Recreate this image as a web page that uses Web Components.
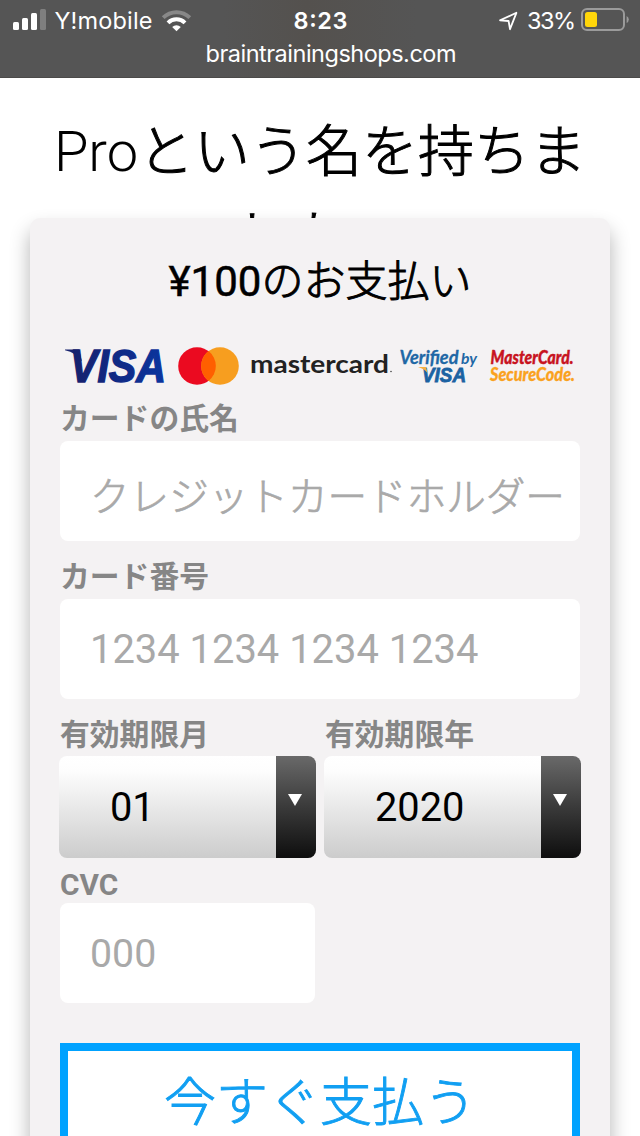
<!DOCTYPE html>
<html lang="ja">
<head>
<meta charset="utf-8">
<title>お支払い</title>
<style>
html, body {
  margin: 0;
  height: 1136px;
  overflow: hidden;
  background: #fff;
  font-family: Roboto, "Noto Sans CJK JP", sans-serif;
}
.kana-text {
  font-weight: 300;
  -webkit-text-stroke: 1px currentColor;
}
</style>
</head>
<body>
<phone-page>
  <status-bar slot="status"></status-bar>
  <page-title slot="title">Pro<span class="kana-text">という名を持ちました。</span></page-title>
  <payment-card>
    <span slot="heading">¥100<span class="kana-text">のお支払い</span></span>
    <brand-logos></brand-logos>
    <form-field label="カードの氏名" class="kana">クレジットカードホルダー</form-field>
    <form-field label="カード番号">1234 1234 1234 1234</form-field>
    <field-row>
      <select-field label="有効期限月">01</select-field>
      <select-field label="有効期限年">2020</select-field>
    </field-row>
    <form-field label="CVC" class="half">000</form-field>
    <pay-button>今すぐ支払う</pay-button>
  </payment-card>
</phone-page>

<script>
class BaseElement extends HTMLElement {
  constructor() {
    super();
    this.attachShadow({mode: 'open'}).innerHTML = this.template();
  }
}

customElements.define('phone-page',
  class extends BaseElement {
    template(){
      return `
<style>
:host {
  display: flex;
  flex-direction: column;
  width: 640px;
  height: 1136px;
  overflow: hidden;
}
</style>
<slot name="status"></slot>
<slot name="title"></slot>
<slot></slot>
      `
    }
  }
);

customElements.define('status-bar',
  class extends BaseElement {
    template(){
      return `
<style>
:host {
  display: block;
  flex: none;
  height: 78px;
  background: linear-gradient(90deg, #555 0, #555 35%, #54514e 48%, #555 65%, #555 100%);
  box-shadow: inset 0 -1px #4b4a49;
}
svg {
  display: block;
  font-family: Inter, "Liberation Sans", sans-serif;
}
</style>
<svg width="640" height="78" fill="#fff">
  <rect x="13" y="22" width="6" height="8" rx="1.5"/>
  <rect x="22" y="18" width="6" height="12" rx="1.5"/>
  <rect x="31" y="13" width="6" height="17" rx="1.5"/>
  <rect x="40" y="9" width="6" height="21" rx="1.5" opacity=".25"/>
  <text x="54.5" y="29" font-size="23.5" textLength="98">Y!mobile</text>
  <g fill="none" stroke="#fff">
    <path d="M163.2 17.6a19 19 0 0 1 26.6 0" stroke-width="4" opacity=".3"/>
    <path d="M168 22.8a12 12 0 0 1 17 0" stroke-width="4"/>
  </g>
  <path d="M172.2 27a6.2 6.2 0 0 1 8.6 0l-4.3 4.2z"/>
  <text x="293.5" y="29" font-size="23.5" font-weight="600" textLength="54">8:23</text>
  <path d="M500 20.3 516.4 12.8 510 29.2 508.6 21z" fill="none" stroke="#fff" stroke-width="1.8" stroke-linejoin="round"/>
  <text x="527" y="29" font-size="23.5" textLength="49">33%</text>
  <rect x="582" y="9" width="42" height="21" rx="5" fill="none" stroke="#9b9b9b" stroke-width="2"/>
  <rect x="585" y="12" width="12" height="15" rx="2.5" fill="#ffd60a"/>
  <path d="M626.6 16q2.2 1 2.2 3.5t-2.2 3.5z" fill="#9b9b9b"/>
  <text x="205.5" y="62" font-size="23.5" textLength="251">braintrainingshops.com</text>
</svg>
      `
    }
  }
);

customElements.define('page-title',
  class extends BaseElement {
    template(){
      return `
<style>
:host {
  display: block;
  flex: none;
  box-sizing: border-box;
  height: 140px;
  padding: 31px 40px 0;
  overflow: hidden;
  font-size: 56px;
  line-height: 86px;
  font-weight: 300;
  text-align: center;
  word-break: break-all;
}
</style>
<slot></slot>
      `
    }
  }
);

customElements.define('payment-card',
  class extends BaseElement {
    template(){
      return `
<style>
:host {
  display: flex;
  flex-direction: column;
  flex: none;
  box-sizing: border-box;
  height: 1000px;
  margin: 0 30px;
  padding: 34px 30px 0;
  border-radius: 10px;
  background: #f4f2f3;
  box-shadow: 0 12px 20px rgba(0, 0, 0, .3);
}
.heading {
  height: 60px;
  line-height: 60px;
  margin-bottom: 28px;
  font-size: 42px;
  text-align: center;
  -webkit-text-stroke: .5px currentColor;
}
</style>
<div class="heading"><slot name="heading"></slot></div>
<slot></slot>
      `
    }
  }
);

customElements.define('brand-logos',
  class extends BaseElement {
    template(){
      return `
<style>
:host {
  display: block;
  height: 61px;
}
svg {
  display: block;
}
</style>
<svg width="520" height="61" viewBox="60 340 520 61">
  <defs>
    <linearGradient id="blue" x1="0" x2="1">
      <stop offset="0" stop-color="#16206b"/>
      <stop offset="1" stop-color="#0a35a0"/>
    </linearGradient>
  </defs>
  <path d="M65 349.500h14l3 12q-6-9-17-11.300z" fill="#18246f"/>
  <text x="70" y="381.500" font-family="Liberation Sans" font-weight="700" font-style="italic" font-size="46" textLength="96" lengthAdjust="spacingAndGlyphs" fill="url(#blue)" stroke="url(#blue)" stroke-width="1.500">VISA</text>
  <circle cx="197" cy="366" r="18.800" fill="#eb0a20"/>
  <circle cx="220" cy="366" r="18.800" fill="#f79e1f"/>
  <path d="M208.500 351.100a18.800 18.800 0 0 1 0 29.800a18.800 18.800 0 0 1 0-29.800z" fill="#ff5f00"/>
  <text x="250" y="373" font-family="Lato" font-weight="700" font-size="25.500" textLength="139" lengthAdjust="spacingAndGlyphs" fill="#222">mastercard</text>
  <circle cx="391" cy="371.500" r=".8" fill="#444"/>
  <g font-family="Lato" font-style="italic" font-weight="700">
    <text x="399.500" y="364" font-size="18.500" textLength="59" lengthAdjust="spacingAndGlyphs" fill="#2067a5" stroke="#2067a5" stroke-width=".3">Verified</text>
    <text x="461" y="364" font-size="16" textLength="16" lengthAdjust="spacingAndGlyphs" fill="#2067a5">by</text>
    <text x="422" y="382" font-family="Liberation Sans" font-size="20" textLength="44" lengthAdjust="spacingAndGlyphs" fill="#1b62a2" stroke="#1b62a2" stroke-width=".8">VISA</text>
    <path d="M418 367h8l1.500 6q-2.500-4-9.500-6z" fill="#f6b143"/>
    <text x="490.500" y="364" font-size="19" font-weight="900" textLength="83" lengthAdjust="spacingAndGlyphs" fill="#c8141f" stroke="#c8141f" stroke-width=".4">MasterCard.</text>
    <text x="490" y="381" font-size="19" font-weight="900" textLength="85" lengthAdjust="spacingAndGlyphs" fill="#faa21e" stroke="#faa21e" stroke-width=".3">SecureCode.</text>
  </g>
</svg>
      `
    }
  }
);

customElements.define('form-field',
  class extends BaseElement {
    static get observedAttributes() {
      return ['label'];
    }

    attributeChangedCallback(attrName, oldVal, newVal) {
      this.shadowRoot.querySelector('.label').textContent = newVal;
    }

    template(){
      return `
<style>
:host {
  display: block;
  margin-bottom: 18px;
}
.label {
  height: 40px;
  line-height: 35px;
  font-size: 29.8px;
  font-weight: 700;
  color: #868686;
  white-space: nowrap;
}
.box {
  box-sizing: border-box;
  height: 100px;
  padding: 0 0 0 30px;
  border-radius: 8px;
  background: #fff;
  color: #a9a9a9;
  font-size: 39.9px;
  line-height: 102px;
  white-space: nowrap;
}
:host(.kana) .box {
  font-size: 39.6px;
  font-weight: 300;
  line-height: 114px;
  -webkit-text-stroke: .7px currentColor;
}
:host(.half) {
  width: 255px;
  margin-bottom: 40px;
}
:host(.half) .label {
  height: 35px;
  line-height: 33px;
}
:host(.half) .box {
  font-size: 39.3px;
}
</style>
<div class="label"></div>
<div class="box"><slot></slot></div>
      `
    }
  }
);

customElements.define('field-row',
  class extends BaseElement {
    template(){
      return `
<style>
:host {
  display: grid;
  grid-template-columns: 257px 257px;
  gap: 8px;
  margin: 0 -1px 10px;
}
</style>
<slot></slot>
      `
    }
  }
);

customElements.define('select-field',
  class extends BaseElement {
    static get observedAttributes() {
      return ['label'];
    }

    attributeChangedCallback(attrName, oldVal, newVal) {
      this.shadowRoot.querySelector('.label').textContent = newVal;
    }

    template(){
      return `
<style>
:host {
  display: block;
}
.label {
  height: 39px;
  line-height: 35px;
  padding-left: 1px;
  font-size: 29.8px;
  font-weight: 700;
  color: #868686;
}
.select {
  display: flex;
  height: 102px;
  border-radius: 8px;
  overflow: hidden;
  background: linear-gradient(#fff 0, #fdfdfd 15%, #ccc 100%);
}
.value {
  flex: 1;
  padding-left: 51px;
  font-size: 39.8px;
  line-height: 104px;
}
.arrow {
  display: flex;
  justify-content: center;
  box-sizing: border-box;
  width: 40px;
  padding-right: 3px;
  background: linear-gradient(#696969, #3a3a3a 50%, #0e0e0e);
}
.arrow svg {
  margin-top: 38px;
}
</style>
<div class="label"></div>
<div class="select">
  <div class="value"><slot></slot></div>
  <div class="arrow"><svg width="16" height="12"><path d="M1 0h14L8 12z" fill="#fff"/></svg></div>
</div>
      `
    }
  }
);

customElements.define('pay-button',
  class extends BaseElement {
    template(){
      return `
<style>
:host {
  display: block;
  box-sizing: border-box;
  height: 124px;
  border: 8px solid #00a2ff;
  background: #fff;
  color: #119ff2;
  font-size: 52px;
  font-weight: 300;
  line-height: 106px;
  text-align: center;
  -webkit-text-stroke: .9px currentColor;
}
</style>
<slot></slot>
      `
    }
  }
);
</script>
</body>
</html>
